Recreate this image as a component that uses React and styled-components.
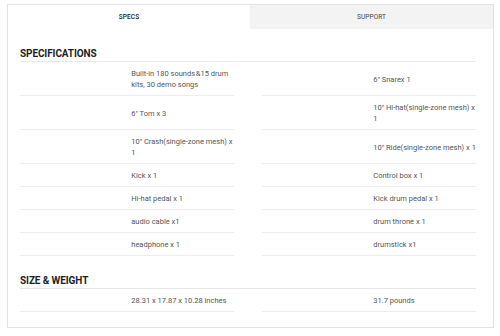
import React from 'react';
import styled, { createGlobalStyle } from 'styled-components';

const GlobalStyle = createGlobalStyle`
	html, body {
		margin: 0;
		padding: 0;
		background: #fff;
	}
	body {
		font-family: Roboto, "Liberation Sans", sans-serif;
	}
`;

const Panel = styled.div`
	margin: 4px 0 0 7px;
	width: 487px;
	height: 324px;
	box-sizing: border-box;
	border: 1px solid #e2e2e2;
	background: #fff;
`;

const Tabs = styled.div`
	display: grid;
	grid-template-columns: 242px 1fr;
	height: 24px;
`;

const Tab = styled.div`
	display: flex;
	align-items: center;
	justify-content: center;
	font-size: 6.5px;
	font-weight: ${p => (p.active ? 500 : 400)};
	letter-spacing: 0.1px;
	color: ${p => (p.active ? '#222' : '#444')};
	background: ${p => (p.active ? '#fff' : '#f3f3f3')};
`;

const Content = styled.div`
	padding: 0 17px 0 12px;
`;

const Section = styled.section`
	margin-top: ${p => p.gap}px;
`;

const Heading = styled.h2`
	margin: 0;
	padding-bottom: 1px;
	font-size: 10px;
	line-height: 12px;
	font-weight: 700;
	letter-spacing: -0.1px;
	color: #1e1e1e;
	border-bottom: 1px solid #e8e8e8;
`;

const SpecGrid = styled.div`
	display: grid;
	grid-template-columns: 1fr 1fr;
	column-gap: 28px;
`;

const SpecItem = styled.div`
	display: grid;
	grid-template-columns: 52% 1fr;
	align-items: center;
	padding: 6px 0 5px;
	border-bottom: 1px solid #ececec;
`;

const SpecLabel = styled.div``;

const SpecValue = styled.div`
	font-size: 7.5px;
	line-height: 11px;
	color: #555;
`;

const specs = [
	['Built-in 180 sounds\u200a&15 drum kits, 30 demo songs', '6" Snarex 1'],
	['6" Tom x 3', '10" Hi-hat(single-zone mesh) x 1'],
	['10" Crash(single-zone mesh) x 1', '10" Ride(single-zone mesh) x 1'],
	['Kick x 1', 'Control box x 1'],
	['Hi-hat pedal x 1', 'Kick drum pedal x 1'],
	['audio cable x1', 'drum throne x 1'],
	['headphone x 1', 'drumstick x1'],
];

const sizes = [['28.31 x 17.87 x 10.28 inches', '31.7 pounds']];

const Spec = ({ value }) => (
	<SpecItem>
		<SpecLabel />
		<SpecValue>{value}</SpecValue>
	</SpecItem>
);

const SpecTable = ({ rows }) => (
	<SpecGrid>
		{rows.map(([left, right], i) => (
			<React.Fragment key={i}>
				<Spec value={left} />
				<Spec value={right} />
			</React.Fragment>
		))}
	</SpecGrid>
);

export default function App() {
	return (
		<>
			<GlobalStyle />
			<Panel>
				<Tabs>
					<Tab active>SPECS</Tab>
					<Tab>SUPPORT</Tab>
				</Tabs>
				<Content>
					<Section gap={19}>
						<Heading>SPECIFICATIONS</Heading>
						<SpecTable rows={specs} />
					</Section>
					<Section gap={19}>
						<Heading>SIZE &amp; WEIGHT</Heading>
						<SpecTable rows={sizes} />
					</Section>
				</Content>
			</Panel>
		</>
	);
}
